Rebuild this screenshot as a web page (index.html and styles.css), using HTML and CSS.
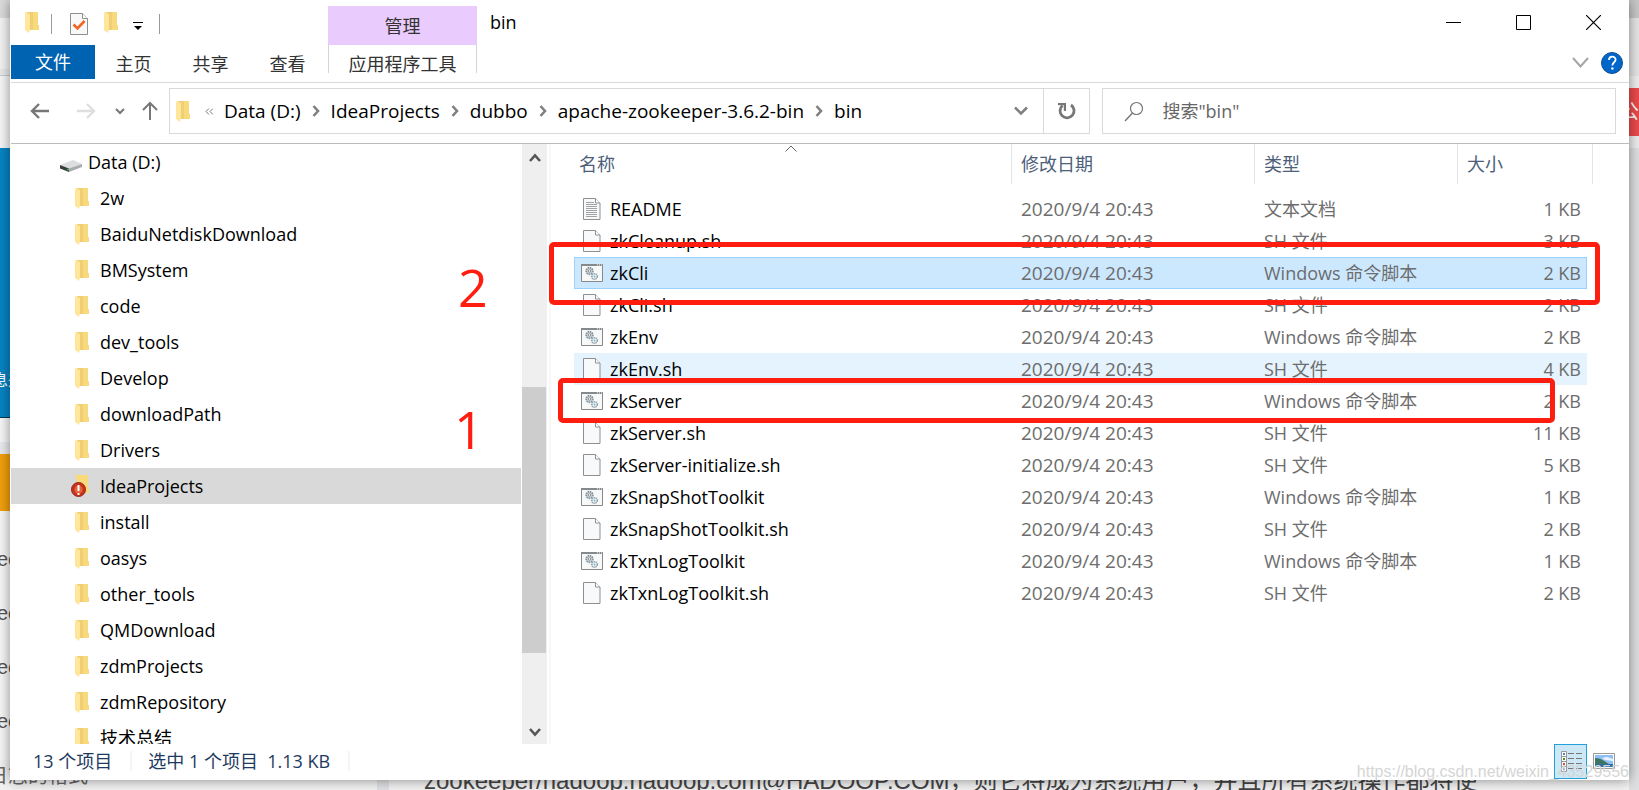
FILE: index.html
```html
<!DOCTYPE html>
<html lang="zh-CN">
<head>
<meta charset="utf-8">
<title>bin</title>
<link rel="stylesheet" href="styles.css">
</head>
<body>
<svg class="defs" aria-hidden="true">
  <defs>
    <symbol id="folder" viewBox="0 0 14 21"><path d="M2 0h11v13l1 0v5H4z" fill="#f0cf74"/><path d="M8 0h5v13l1 0v5H8z" fill="#f8d97b"/><path d="M0 0l5 2v15l-1 4-4-3z" fill="#ffe69b"/></symbol>
    <symbol id="doc" viewBox="0 0 18 22"><path d="M.5.5h12l4.500 4.500v16.500H.5z" fill="#f8f9fa" stroke="#8d8f91"/><path d="M12.500.5v4.500H17" fill="#fff" stroke="#8d8f91"/></symbol>
    <symbol id="txt" viewBox="0 0 18 22"><use href="#doc"/><path d="M3 4.500h8M3 6.500h11M3 8.500h11M3 10.500h11M3 12.500h11M3 14.500h11M3 16.500h11M3 18.500h11" stroke="#a0a2a4"/></symbol>
    <symbol id="cmd" viewBox="0 0 22 18"><path d="M.5.5h21v17H.5z" fill="#f7f8f8" stroke="#86898c"/><path d="M0 1h22" stroke="#86898c" stroke-width="2"/><path d="M16 1h1M18 1h1M20 1h1" stroke="#fff"/><circle cx="8.500" cy="7" r="3.300" fill="#cfd6db" stroke="#87929a" stroke-width="1.800" stroke-dasharray="1.500 .7"/><circle cx="8.500" cy="7" r="1.200" fill="#fff" stroke="#87929a"/><circle cx="13.500" cy="12.500" r="2.800" fill="#e2eef4" stroke="#8ba0ac" stroke-width="1.500" stroke-dasharray="1.300 .7"/><circle cx="13.500" cy="12.500" r=".8" fill="#8ba0ac"/></symbol>
    <symbol id="chev" viewBox="0 0 8 12"><path d="M1.500 1l4.500 5-4.500 5" fill="none" stroke="#808080" stroke-width="2.600"/></symbol>
  </defs>
</svg>

<div class="backdrop" aria-hidden="true">
  <div class="strip strip-left"><i class="l1"></i><i class="l2"></i><i class="l3"></i><i class="l4"></i><i class="l5">息来</i><i class="l6"></i><i class="l7"></i><i class="l8"></i><div class="peek"><p>ee</p><p>ee</p><p>ee</p><p>ee</p></div></div>
  <div class="under"><i class="gutter"></i><p class="under-a">日志的格式</p><p class="under-b">zookeeper/hadoop.hadoop.com@HADOOP.COM，则它将成为系统用户，并且所有系统操作都将使</p></div>
  <div class="strip strip-right"><i class="r1"></i><i class="r2"></i><i class="r3">公</i><i class="r4"></i></div>
</div>

<main class="window">
  <header class="titlebar">
    <div class="quick">
      <svg width="14" height="21"><use href="#folder"/></svg>
      <span class="bar"></span>
      <button aria-label="属性"><svg width="18" height="22"><path d="M.5.5h12l5 5v16H.5z" fill="#f8f8f8" stroke="#8d8f91"/><path d="M12.500.5v5h5" fill="#fff" stroke="#8d8f91"/><path d="M3.500 11.500l4 4 7-7.500" fill="none" stroke="#f26522" stroke-width="2.600"/></svg></button>
      <button aria-label="新建文件夹"><svg width="14" height="21"><use href="#folder"/></svg></button>
      <button class="custom" aria-label="自定义"><svg width="10" height="8"><path d="M0 0h10v1H0zM1 4h8L5 8z" fill="#000"/></svg></button>
      <span class="bar"></span>
    </div>
    <div class="context">管理</div>
    <h1>bin</h1>
    <div class="controls">
      <button aria-label="最小化"><svg width="15" height="15"><path d="M0 7.500h15" stroke="#000"/></svg></button>
      <button aria-label="最大化"><svg width="15" height="15"><path d="M.5.5h14v14H.5z" fill="none" stroke="#000"/></svg></button>
      <button aria-label="关闭"><svg width="15" height="15"><path d="M0 0l15 15M15 0L0 15" stroke="#000" stroke-width="1.200"/></svg></button>
    </div>
  </header>

  <nav class="ribbon">
    <button class="file">文件</button><button>主页</button><button>共享</button><button>查看</button><button class="tools">应用程序工具</button>
    <div class="help">
      <button aria-label="展开功能区"><svg width="17" height="11"><path d="M1 1l7.500 8.500L16 1" fill="none" stroke="#a5a5a5" stroke-width="2"/></svg></button>
      <button aria-label="帮助"><svg width="22" height="22"><circle cx="11" cy="11" r="10.500" fill="#0066cc" stroke="#15508c"/><path d="M8 8c0-4.500 6.600-4.300 6.600-.4 0 2.700-3.200 2.700-3.200 5.900" fill="none" stroke="#fff" stroke-width="1.800"/><circle cx="11.400" cy="16.500" r="1.200" fill="#fff"/></svg></button>
    </div>
  </nav>

  <div class="navbar">
    <div class="arrows">
      <button aria-label="后退"><svg width="20" height="16"><path d="M19 8H2M9 1L2 8l7 7" fill="none" stroke="#777" stroke-width="2.400"/></svg></button>
      <button aria-label="前进"><svg width="20" height="16"><path d="M1 8h17M11 1l7 7-7 7" fill="none" stroke="#dedede" stroke-width="2.400"/></svg></button>
      <button aria-label="最近位置"><svg width="10" height="7"><path d="M1 1l4 4 4-4" fill="none" stroke="#777" stroke-width="2"/></svg></button>
      <button aria-label="上移"><svg width="16" height="20"><path d="M8 19V2M1 9l7-7 7 7" fill="none" stroke="#777" stroke-width="2"/></svg></button>
    </div>
    <div class="address">
      <svg width="14" height="21"><use href="#folder"/></svg>
      <svg class="more" width="8" height="7"><path d="M4 .5l-3 3 3 3M8 .5l-3 3 3 3" fill="none" stroke="#777"/></svg>
      <a href="#">Data (D:)</a><svg width="8" height="12"><use href="#chev"/></svg>
      <a href="#">IdeaProjects</a><svg width="8" height="12"><use href="#chev"/></svg>
      <a href="#">dubbo</a><svg width="8" height="12"><use href="#chev"/></svg>
      <a href="#">apache-zookeeper-3.6.2-bin</a><svg width="8" height="12"><use href="#chev"/></svg>
      <a href="#">bin</a>
      <button class="drop" aria-label="以前的位置"><svg width="14" height="10"><path d="M1 1.500l6 6 6-6" fill="none" stroke="#808080" stroke-width="2.600"/></svg></button>
      <button class="refresh" aria-label="刷新"><svg width="18" height="18"><path d="M4.500 3.500a7 7 0 1 0 8.500-.5" fill="none" stroke="#777" stroke-width="2.800"/><path d="M0 1h8v8H5.800V3.200H0z" fill="#777"/></svg></button>
    </div>
    <label class="search">
      <svg width="20" height="21"><circle cx="12.500" cy="7.500" r="6" fill="none" stroke="#777" stroke-width="1.200"/><path d="M8.500 12L1 20" stroke="#777" stroke-width="1.400"/></svg>
      <input type="text" placeholder='搜索"bin"' aria-label="搜索">
    </label>
  </div>

  <div class="panes">
    <aside class="tree">
      <ul>
        <li class="drive"><svg width="22" height="12"><path d="M0 5l13-5 9 4-13 5z" fill="#dcdee0"/><path d="M9 8.500L22 4v3L9 12z" fill="#a9acaf"/><path d="M0 5l9 3.500V12L0 8.500z" fill="#3b3e40"/><path d="M7 9.500h2" stroke="#35c04a" stroke-width="1.500"/></svg>Data (D:)</li>
        <li><svg width="14" height="21"><use href="#folder"/></svg>2w</li>
        <li><svg width="14" height="21"><use href="#folder"/></svg>BaiduNetdiskDownload</li>
        <li><svg width="14" height="21"><use href="#folder"/></svg>BMSystem</li>
        <li><svg width="14" height="21"><use href="#folder"/></svg>code</li>
        <li><svg width="14" height="21"><use href="#folder"/></svg>dev_tools</li>
        <li><svg width="14" height="21"><use href="#folder"/></svg>Develop</li>
        <li><svg width="14" height="21"><use href="#folder"/></svg>downloadPath</li>
        <li><svg width="14" height="21"><use href="#folder"/></svg>Drivers</li>
        <li class="current"><svg class="alert" width="18" height="22"><path d="M4 0h13v13h1v5H9z" fill="#f8d97b"/><circle cx="7.500" cy="14.500" r="7" fill="#c9301c" stroke="#96281b"/><circle cx="7.500" cy="14.500" r="4" fill="#e0653a"/><path d="M7.500 10v6M7.500 18v2" stroke="#fff" stroke-width="2"/></svg>IdeaProjects</li>
        <li><svg width="14" height="21"><use href="#folder"/></svg>install</li>
        <li><svg width="14" height="21"><use href="#folder"/></svg>oasys</li>
        <li><svg width="14" height="21"><use href="#folder"/></svg>other_tools</li>
        <li><svg width="14" height="21"><use href="#folder"/></svg>QMDownload</li>
        <li><svg width="14" height="21"><use href="#folder"/></svg>zdmProjects</li>
        <li><svg width="14" height="21"><use href="#folder"/></svg>zdmRepository</li>
        <li><svg width="14" height="21"><use href="#folder"/></svg>技术总结</li>
      </ul>
      <div class="scroll">
        <svg width="12" height="10"><path d="M1 8l5-5.500L11 8" fill="none" stroke="#555" stroke-width="2.600"/></svg>
        <div class="track"><div class="thumb"></div></div>
        <svg width="12" height="10"><path d="M1 2l5 5.500L11 2" fill="none" stroke="#555" stroke-width="2.600"/></svg>
      </div>
    </aside>
    <section class="files">
      <svg class="sort" width="12" height="7"><path d="M.5 6.500L6 1l5.500 5.500" fill="none" stroke="#666"/></svg>
      <table>
        <colgroup><col class="name"><col class="date"><col class="type"><col><col class="edge"></colgroup>
        <thead><tr><th>名称</th><th>修改日期</th><th>类型</th><th colspan="2">大小</th></tr></thead>
        <tbody>
          <tr><td><svg width="22" height="22"><use href="#txt" x="2" width="18" height="22"/></svg>README</td><td>2020/9/4 20:43</td><td>文本文档</td><td>1 KB</td></tr>
          <tr><td><svg width="22" height="22"><use href="#doc" x="2" width="18" height="22"/></svg>zkCleanup.sh</td><td>2020/9/4 20:43</td><td>SH 文件</td><td>3 KB</td></tr>
          <tr class="selected"><td><svg width="22" height="18"><use href="#cmd"/></svg>zkCli</td><td>2020/9/4 20:43</td><td>Windows 命令脚本</td><td>2 KB</td></tr>
          <tr><td><svg width="22" height="22"><use href="#doc" x="2" width="18" height="22"/></svg>zkCli.sh</td><td>2020/9/4 20:43</td><td>SH 文件</td><td>2 KB</td></tr>
          <tr><td><svg width="22" height="18"><use href="#cmd"/></svg>zkEnv</td><td>2020/9/4 20:43</td><td>Windows 命令脚本</td><td>2 KB</td></tr>
          <tr class="hover"><td><svg width="22" height="22"><use href="#doc" x="2" width="18" height="22"/></svg>zkEnv.sh</td><td>2020/9/4 20:43</td><td>SH 文件</td><td>4 KB</td></tr>
          <tr><td><svg width="22" height="18"><use href="#cmd"/></svg>zkServer</td><td>2020/9/4 20:43</td><td>Windows 命令脚本</td><td>2 KB</td></tr>
          <tr><td><svg width="22" height="22"><use href="#doc" x="2" width="18" height="22"/></svg>zkServer.sh</td><td>2020/9/4 20:43</td><td>SH 文件</td><td>11 KB</td></tr>
          <tr><td><svg width="22" height="22"><use href="#doc" x="2" width="18" height="22"/></svg>zkServer-initialize.sh</td><td>2020/9/4 20:43</td><td>SH 文件</td><td>5 KB</td></tr>
          <tr><td><svg width="22" height="18"><use href="#cmd"/></svg>zkSnapShotToolkit</td><td>2020/9/4 20:43</td><td>Windows 命令脚本</td><td>1 KB</td></tr>
          <tr><td><svg width="22" height="22"><use href="#doc" x="2" width="18" height="22"/></svg>zkSnapShotToolkit.sh</td><td>2020/9/4 20:43</td><td>SH 文件</td><td>2 KB</td></tr>
          <tr><td><svg width="22" height="18"><use href="#cmd"/></svg>zkTxnLogToolkit</td><td>2020/9/4 20:43</td><td>Windows 命令脚本</td><td>1 KB</td></tr>
          <tr><td><svg width="22" height="22"><use href="#doc" x="2" width="18" height="22"/></svg>zkTxnLogToolkit.sh</td><td>2020/9/4 20:43</td><td>SH 文件</td><td>2 KB</td></tr>
        </tbody>
      </table>
    </section>
  </div>

  <footer class="status">
    <span>13 个项目</span><span>选中 1 个项目&nbsp; 1.13 KB</span>
    <div class="views">
      <button class="on" aria-label="详细信息"><svg width="22" height="22"><path d="M1.500 1.500h5v20h-5zM1 6.500h6M1 11.500h6M1 16.500h6" fill="#fff" stroke="#999"/><path d="M3 4h2" stroke="#4a84c4" stroke-width="2"/><path d="M3 9h2" stroke="#5a8a30" stroke-width="2"/><path d="M3 14h2" stroke="#e0542c" stroke-width="2"/><path d="M3 19h2" stroke="#4a84c4" stroke-width="2"/><path d="M8 3.500h6M16 3.500h6M8 8.500h6M16 8.500h6M8 13.500h6M16 13.500h6M8 18.500h6M16 18.500h6" stroke="#777"/></svg></button>
      <button aria-label="大缩略图"><svg width="22" height="16"><path d="M.5.5h21v15H.5z" fill="#fff" stroke="#999"/><path d="M2 2h18v12H2z" fill="#8fc0f5"/><path d="M2 5c6 0 9 3 14 6H2z" fill="#3f7560"/><path d="M2 11h18v3H2z" fill="#2c6f9f"/><path d="M9 5l5-1 6 2v2l-8-1z" fill="#eaf3fd"/></svg></button>
    </div>
  </footer>
</main>

<div class="mark mark-cli"></div>
<div class="mark mark-server"></div>
<span class="num num-two">2</span>
<span class="num num-one">1</span>
<span class="watermark">https://blog.csdn.net/weixin_43529556</span>
</body>
</html>
```
FILE: styles.css
```css
* { box-sizing: border-box; }
body { margin: 0; height: 100vh; overflow: hidden; position: relative; background: #f2f2f2; color: #000; font: 18px/24px "Open Sans", "Noto Sans CJK SC", sans-serif; }
button { border: 0; padding: 0; background: none; font: inherit; color: inherit; }
svg { display: block; flex: none; }
ul, p, h1 { margin: 0; padding: 0; list-style: none; font-weight: normal; }
.defs { position: absolute; width: 0; height: 0; }

.backdrop { position: absolute; inset: 0; overflow: hidden; }
.strip { position: absolute; top: 0; bottom: 0; display: flex; flex-direction: column; overflow: hidden; background: #f7f7f7; }
.strip i { font-style: normal; flex: none; display: block; color: #fff; white-space: nowrap; }
.strip-left { left: 0; width: 10px; }
.strip-right { right: 0; width: 10px; background: #dfe0e2; }
.l1 { height: 18px; background: #dcdcdc; }
.l2 { height: 51px; background: #f4f4f4; }
.l3 { height: 7px; background: #ebebeb; border-bottom: 1px solid #ccc; }
.l4 { height: 72px; }
.strip .l5 { height: 270px; padding-top: 220px; background: #0685c4; border-bottom: 1px solid #08384f; font-size: 16px; text-indent: -8px; }
.l6 { height: 24px; }
.l7 { height: 12px; background: #eaebee; }
.l8 { height: 57px; background: #f2a00d; }
.peek { padding-top: 21px; font: 20px/54px "Liberation Sans", sans-serif; color: #555; text-indent: -3px; }
.under { position: absolute; left: 0; right: 0; bottom: 0; height: 30px; background: #f2f2f2; font: 20px/28px "Liberation Sans", "Noto Sans CJK SC", sans-serif; color: #444; white-space: nowrap; overflow: hidden; }
.under p { position: absolute; }
.gutter { position: absolute; left: 377px; width: 12px; top: 0; bottom: 0; background: #e0e1e4; }
.under .under-a { left: -12px; top: 2px; color: #666; }
.under .under-b { left: 424px; top: 7px; font-size: 24px; }
.r1 { height: 18px; background: #c8c8c8; }
.r2 { height: 70px; background: #e6e6e6; border-bottom: 12px solid #f0f0f0; }
.strip .r3 { height: 48px; background: #ec4a4b; font-size: 20px; line-height: 48px; text-indent: -10px; }
.r4 { height: 12px; background: #eee; }

.window { position: absolute; inset: 0 10px 10px; display: flex; flex-direction: column; background: #fff; padding-left: 1px; box-shadow: 0 0 12px rgba(0, 0, 0, .45); }
.titlebar { display: flex; height: 45px; flex: none; }
.quick { width: 317px; flex: none; display: flex; align-items: center; padding-left: 14px; }
.quick .bar { width: 1px; height: 20px; margin: 3px 0 0 12px; background: #999; }
.quick button { margin-left: 16px; }
.quick .bar + button { margin: 2px 0 0 18px; }
.quick .custom { margin: 6px 0 0 15px; }
.quick .bar:last-child { margin-left: 16px; }
.context { width: 149px; flex: none; margin-top: 6px; line-height: 41px; height: 39px; text-align: center; background: #eacbfd; color: #333; }
h1 { flex: 1; padding: 10px 13px; font-size: 18px; }
.controls { display: flex; align-items: center; gap: 55px; padding-right: 28px; }
.ribbon { display: flex; height: 38px; flex: none; border-bottom: 1px solid #dadada; color: #333; }
.ribbon > button { width: 77px; height: 34px; line-height: 34px; padding-top: 2px; }
.ribbon .file { width: 84px; padding: 0; background: #0063b1; color: #fff; }
.ribbon > .tools { width: 149px; margin-left: 2px; height: 28px; border: solid #d5d5d5; border-width: 0 1px; line-height: 28px; padding-top: 5px; }
.help { display: flex; align-items: center; gap: 12px; margin-left: auto; padding: 0 6px 2px 0; }

.navbar { display: flex; height: 61px; flex: none; padding: 5px 13px 9px 0; border-bottom: 1px solid #bbb; }
.arrows { width: 158px; flex: none; display: flex; align-items: center; padding-left: 19px; gap: 20px; }
.arrows button:nth-child(2) { margin-left: 6px; }
.arrows button:nth-child(3) { margin-left: -1px; }
.arrows button:nth-child(4) { margin-left: -3px; }
.address { flex: 1; display: flex; align-items: center; border: 1px solid #d9d9d9; padding-left: 6px; gap: 11px; font-size: 19px; }
.address .more { margin-left: 4px; }
.address a { color: #000; text-decoration: none; white-space: nowrap; }
.drop { margin-left: auto; margin-right: 4px; }
.refresh { width: 46px; align-self: stretch; display: grid; place-items: center; border-left: 1px solid #d9d9d9; }
.search { width: 32%; flex: none; display: flex; align-items: center; gap: 18px; margin-left: 12px; padding-left: 21px; border: 1px solid #d9d9d9; }
.search input { flex: 1; min-width: 0; border: 0; padding: 0; outline: 0; background: none; font: inherit; }
.search input::placeholder { color: #666; opacity: 1; }

.panes { flex: 1; min-height: 0; display: flex; }
.tree { width: 540px; flex: none; display: flex; border-right: 2px solid #f7f7f7; overflow: hidden; padding-right: 2px; }
.tree ul { flex: 1; margin-right: 1px; }
.tree li { display: flex; align-items: center; height: 36px; padding-left: 64px; gap: 11px; }
.tree .drive { padding-left: 49px; gap: 6px; }
.drive svg { margin-top: 8px; }
.tree .current { padding-left: 60px; background: #d9d9d9; }
.scroll { width: 25px; display: flex; flex-direction: column; align-items: center; padding: 9px 0 7px; background: #efefef; }
.track { flex: 1; align-self: stretch; padding-top: 224px; }
.thumb { height: 266px; width: 24px; background: #cdcdcd; }

.files { flex: 1; position: relative; padding: 0 36px 0 23px; }
.sort { position: absolute; top: 1px; left: 234px; }
table { width: 100%; table-layout: fixed; border-collapse: separate; border-spacing: 0; }
.name { width: 438px; }
.date { width: 243px; }
.type { width: 203px; }
.edge { width: 6px; }
th { height: 40px; padding: 0 9px; border-right: 1px solid #e5e5e5; text-align: left; font-weight: normal; color: #4c607a; }
th:first-child { padding-left: 5px; }
thead::after { content: ""; display: block; height: 9px; }
td { height: 32px; padding: 0 6px 0 9px; color: #6d6d6d; white-space: nowrap; }
td:first-child { display: flex; align-items: center; gap: 7px; padding-left: 7px; color: #000; }
td:nth-child(2) { font-size: 19px; }
td:last-child { text-align: right; }
.selected td { background: #cce8ff; border: solid #99d1ff; border-width: 1px 0; }
.selected td:first-child { border-left-width: 1px; padding-left: 6px; }
.selected td:last-child { border-right-width: 1px; padding-right: 5px; }
.hover td { background: #e5f3ff; }

.status { display: flex; align-items: center; height: 36px; flex: none; padding: 0 0 2px 22px; color: #1f3a5f; }
.status > span { padding-right: 18px; margin-right: 16px; border-right: 2px solid #f5f5f5; line-height: 20px; }
.views { display: flex; align-items: center; gap: 6px; margin-left: auto; padding-right: 14px; }
.views .on { width: 33px; height: 35px; display: grid; place-items: center; background: #cce8f6; border: 1px solid #26a0da; }

.mark { position: absolute; border: 5px solid #ff1d10; border-radius: 5px; }
.mark-cli { left: 549px; right: 39px; top: 242px; height: 63px; }
.mark-server { left: 558px; right: 84px; top: 378px; height: 45px; }
.num { position: absolute; font-size: 52px; line-height: 52px; color: #ff1d10; }
.num-two { left: 458px; top: 261px; }
.num-one { left: 454px; top: 403px; }
.watermark { position: absolute; right: 10px; bottom: 6px; font: 16px/24px "Liberation Sans", sans-serif; color: #d5d5d5; }
```
